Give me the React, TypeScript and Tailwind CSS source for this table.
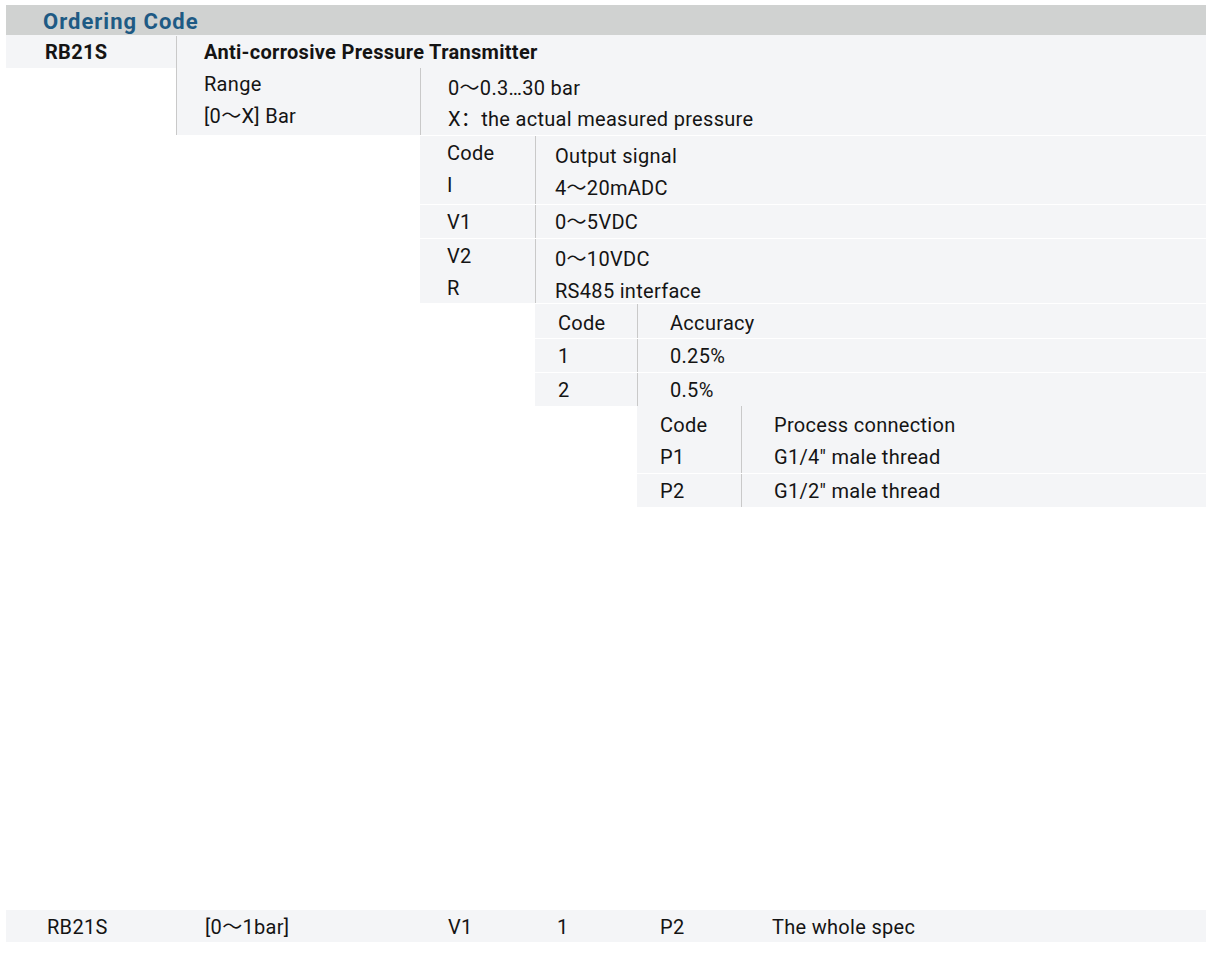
import React from 'react';

type Row = { left: string[]; right: string[]; low?: boolean };

const font = { fontFamily: 'Roboto, "Noto Sans CJK SC", sans-serif' };

// one text line inside a cell; "low" rows sit a few px lower like the header rows of each block
const Line: React.FC<{ text: string; multi: boolean; low?: boolean }> = ({ text, multi, low }) => {
  if (multi) return <div className="h-[32px] leading-[32px]">{text}</div>;
  if (low) return <div className="h-[34px] pt-[5px] leading-[29px]">{text}</div>;
  return <div className="h-[33px] pt-[2px] leading-[31px]">{text}</div>;
};

// a staircase block: fixed code column + description column, divider between them
const Block: React.FC<{
  offset: string;
  leftW: string;
  leftPad: string;
  rightPad: string;
  rows: Row[];
}> = ({ offset, leftW, leftPad, rightPad, rows }) => (
  <div className={`${offset} flex flex-col`}>
    {rows.map((r, i) => {
      const multi = r.left.length > 1;
      return (
        <div key={i} className={`flex bg-[#f4f5f7] ${i > 0 ? 'border-t border-white' : ''}`}>
          <div className={`${leftW} ${leftPad} shrink-0 ${multi ? (r.low ? 'pt-[3px]' : 'pt-[1px]') : ''}`}>
            {r.left.map((t, j) => (
              <Line key={j} text={t} multi={multi} low={r.low} />
            ))}
          </div>
          <div className={`flex-1 border-l border-[#c9c9c9] ${rightPad} ${multi ? (r.low ? 'pt-[3px]' : 'pt-[4px]') : ''}`}>
            {r.right.map((t, j) => (
              <Line key={j} text={t} multi={multi} low={r.low} />
            ))}
          </div>
        </div>
      );
    })}
  </div>
);

const App: React.FC = () => {
  return (
    <div className="min-h-screen bg-white text-[20px] tracking-[0.3px] text-[#141414]" style={font}>
      <div className="ml-[6px] w-[1200px] pt-[5px]">
        <div className="h-[30px] bg-[#d0d2d1] pl-[37px] text-[22px] font-bold leading-[33px] tracking-[1px] text-[#1e5a84]">
          Ordering Code
        </div>

        <div className="flex h-[33px] bg-[#f4f5f7] pt-[1px] font-bold leading-[33px]">
          <div className="w-[170px] shrink-0 pl-[39px]">RB21S</div>
          <div className="flex-1 border-l border-[#c9c9c9] pl-[27px]">Anti-corrosive Pressure Transmitter</div>
        </div>

        <div className="ml-[170px] flex h-[67px] border-l border-[#c9c9c9] bg-[#f4f5f7]">
          <div className="w-[243px] shrink-0 pl-[27px]">
            <div className="h-[32px] leading-[32px]">Range</div>
            <div className="h-[32px] leading-[32px]">[0～X] Bar</div>
          </div>
          <div className="flex-1 border-l border-[#c9c9c9] pl-[27px] pt-[5px]">
            <div className="h-[31px] leading-[31px]">0～0.3…30 bar</div>
            <div className="h-[31px] leading-[31px]">X：the actual measured pressure</div>
          </div>
        </div>

        <div className="mt-[1px] h-[167px] overflow-hidden">
          <Block
            offset="ml-[414px]"
            leftW="w-[115px]"
            leftPad="pl-[27px]"
            rightPad="pl-[19px]"
            rows={[
              { left: ['Code', 'I'], right: ['Output signal', '4～20mADC'] },
              { left: ['V1'], right: ['0～5VDC'] },
              { left: ['V2', 'R'], right: ['0～10VDC', 'RS485 interface'] },
            ]}
          />
        </div>

        <div className="mt-[1px]">
          <Block
            offset="ml-[529px]"
            leftW="w-[102px]"
            leftPad="pl-[23px]"
            rightPad="pl-[32px]"
            rows={[
              { left: ['Code'], right: ['Accuracy'], low: true },
              { left: ['1'], right: ['0.25%'] },
              { left: ['2'], right: ['0.5%'] },
            ]}
          />
        </div>

        <Block
          offset="ml-[631px]"
          leftW="w-[104px]"
          leftPad="pl-[23px]"
          rightPad="pl-[32px]"
          rows={[
            { left: ['Code', 'P1'], right: ['Process connection', 'G1/4" male thread'], low: true },
            { left: ['P2'], right: ['G1/2" male thread'] },
          ]}
        />

        <div className="mt-[403px] flex h-[32px] items-center bg-[#f4f5f7] pt-[3px] leading-[29px]">
          <div className="w-[159px] shrink-0 pl-[41px]">RB21S</div>
          <div className="w-[283px] shrink-0 pl-[40px]">[0～1bar]</div>
          <div className="w-[109px] shrink-0">V1</div>
          <div className="w-[103px] shrink-0">1</div>
          <div className="w-[112px] shrink-0">P2</div>
          <div>The whole spec</div>
        </div>
      </div>
    </div>
  );
};

export default App;
